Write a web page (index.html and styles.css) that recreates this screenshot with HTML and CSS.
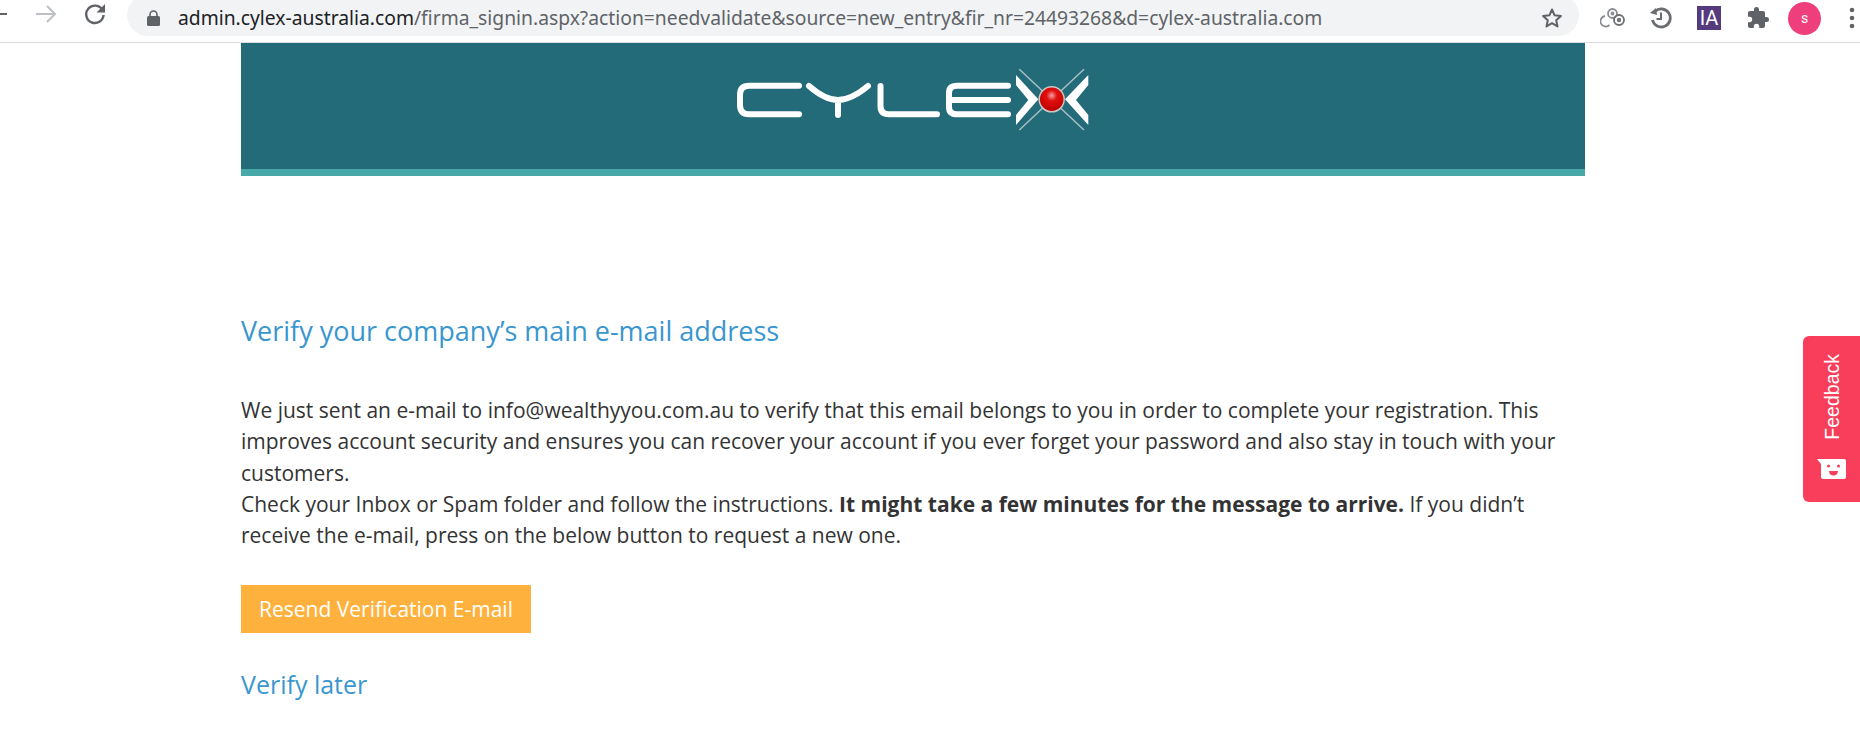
FILE: index.html
```html
<!DOCTYPE html>
<html lang="en">
<head>
<meta charset="utf-8">
<title>Verify your company's main e-mail address</title>
<link rel="stylesheet" href="styles.css">
</head>
<body>
<header class="toolbar">
  <svg class="nav-back" width="8" height="4" viewBox="0 0 8 4"><rect y="1" width="7" height="2" fill="#5f6368"/></svg>
  <svg class="nav-forward" width="22" height="18" viewBox="0 0 22 18"><path d="M1 9H20M12 1l8 8-8 8" fill="none" stroke="#bdc0c4" stroke-width="2"/></svg>
  <svg class="nav-reload" width="22" height="22" viewBox="0 0 22 22"><path d="M18.5 7A8.7 8.7 0 1 0 19.6 12" fill="none" stroke="#5f6368" stroke-width="2.4"/><path d="M21 1v8.5h-8.5z" fill="#5f6368"/></svg>
  <div class="omnibox">
    <svg class="lock" width="13" height="16" viewBox="0 0 13 16"><path d="M3 7V4.5a3.5 3.5 0 0 1 7 0V7" fill="none" stroke="#5f6368" stroke-width="1.6"/><rect y="6" width="13" height="10" rx="1.5" fill="#5f6368"/></svg>
    <div class="url"><span class="url-host">admin.cylex-australia.com</span>/firma_signin.aspx?action=needvalidate&amp;source=new_entry&amp;fir_nr=24493268&amp;d=cylex-australia.com</div>
    <svg class="star" width="22" height="22" viewBox="0 0 22 22"><path d="M11 2.5l2.6 5.8 6.3.7-4.7 4.2 1.3 6.2L11 16.2l-5.5 3.2 1.3-6.2L2.100 9l6.300-.7z" fill="none" stroke="#5f6368" stroke-width="2" stroke-linejoin="round"/></svg>
  </div>
  <div class="extensions">
    <svg class="ext-rings" width="26" height="22" viewBox="0 0 26 22" fill="none" stroke="#8a8d91" stroke-width="1.800"><circle cx="12.500" cy="6.500" r="4.500"/><circle cx="12.500" cy="6.500" r="1"/><circle cx="19" cy="13" r="5" stroke="#6b6e72"/><circle cx="19" cy="13" r="1.300" stroke="#6b6e72"/><path d="M9.500 18A5.300 5.300 0 1 1 5 9"/></svg>
    <svg class="ext-history" width="22" height="22" viewBox="0 0 22 22"><path d="M5 4.500A9 9 0 1 1 2.500 13" fill="none" stroke="#6a6d71" stroke-width="2.800"/><path d="M0 6l6-5 1 7z" fill="#6a6d71"/><path d="M11 5.500V12H6.500" fill="none" stroke="#6a6d71" stroke-width="2"/></svg>
    <div class="ext-ia">IA</div>
    <svg class="ext-puzzle" width="24" height="24" viewBox="0 0 24 24"><path d="M20.500 11H19V7c0-1.100-.9-2-2-2h-4V3.500a2.500 2.500 0 0 0-5 0V5H4c-1.100 0-2 .9-2 2v3.800h1.500a2.700 2.700 0 0 1 0 5.400H2V20c0 1.100.9 2 2 2h3.800v-1.500a2.700 2.700 0 0 1 5.400 0V22H17c1.100 0 2-.9 2-2v-4h1.500a2.500 2.500 0 0 0 0-5z" fill="#5f6368"/></svg>
    <div class="avatar">s</div>
    <svg class="menu-dots" width="6" height="22" viewBox="0 0 6 22"><circle cx="3" cy="3" r="2.300" fill="#5f6368"/><circle cx="3" cy="11" r="2.300" fill="#5f6368"/><circle cx="3" cy="19" r="2.300" fill="#5f6368"/></svg>
  </div>
</header>

<main class="page">
  <div class="banner">
    <svg class="logo" width="352" height="64" viewBox="0 0 352 64" role="img" aria-label="Cylex logo">
      <g fill="none" stroke="#fff" stroke-width="6" stroke-linecap="round" stroke-linejoin="round">
        <path d="M62 17.700H12Q3 17.700 3 27V37Q3 46.300 12 46.300H62"/>
        <path d="M72 18Q88 32 101 32Q114 32 131 18M101 32V47"/>
        <path d="M143.500 18V38Q143.500 46.300 152 46.300H200"/>
        <path d="M271 17.700H220Q212 17.700 212 25V39Q212 46.300 220 46.300H271M216 32H271"/>
      </g>
      <path d="M282.300 1.300L347 62M347 1.300L282.300 62" stroke="#a9bfc4" stroke-width="1.500"/>
      <path d="M279 7L301.300 31.300 279 57V47L291.300 32 279 17zM351.300 7L328 31.300 351.300 57V47L339 32 351.300 17z" fill="#fff"/>
      <defs>
        <radialGradient id="ball" cx="50%" cy="35%" r="60%">
          <stop offset="0" stop-color="#f4a0a0"/>
          <stop offset=".35" stop-color="#e21010"/>
          <stop offset="1" stop-color="#c00000"/>
        </radialGradient>
      </defs>
      <circle cx="314.700" cy="31.300" r="12.500" fill="url(#ball)" stroke="#c9c9c9" stroke-width="1.500"/>
    </svg>
  </div>

  <h1 class="title">Verify your company’s main e-mail address</h1>

  <p class="message">We just sent an e-mail to info@wealthyyou.com.au to verify that this email belongs to you in order to complete your registration. This improves account security and ensures you can recover your account if you ever forget your password and also stay in touch with your customers.<br>Check your Inbox or Spam folder and follow the instructions. <strong>It might take a few minutes for the message to arrive.</strong> If you didn’t receive the e-mail, press on the below button to request a new one.</p>

  <button class="resend" type="button">Resend Verification E-mail</button>

  <a class="later" href="#">Verify later</a>
</main>

<aside class="feedback">
  <span class="feedback-label">Feedback</span>
  <svg class="feedback-face" width="30" height="22" viewBox="0 0 30 22"><path d="M0 1H27a2 2 0 0 1 2 2V19a2 2 0 0 1-2 2H6a2 2 0 0 1-2-2V6z" fill="#fff"/><circle cx="11.500" cy="8" r="1.500" fill="#f83e5a"/><circle cx="21.500" cy="8" r="1.500" fill="#f83e5a"/><path d="M12 13h9a4.500 4.500 0 0 1-9 0z" fill="#f83e5a"/></svg>
</aside>
</body>
</html>
```

FILE: styles.css
```css
* { box-sizing: border-box; }

html, body {
  margin: 0;
  padding: 0;
  height: 100%;
  overflow: hidden;
  background: #fff;
}

body {
  font-family: "Open Sans", "Liberation Sans", sans-serif;
  color: #333;
}

.toolbar {
  display: flex;
  align-items: center;
  height: 43px;
  border-bottom: 1px solid #dadce0;
  overflow: hidden;
  background: #fff;
}

.toolbar svg { flex: none; display: block; }

.nav-back { margin: -14px 0 0 0; }
.nav-forward { margin: -14px 0 0 27px; }
.nav-reload { margin: -14px 0 0 27px; }

.omnibox {
  display: flex;
  align-items: center;
  flex: none;
  width: 1452px;
  height: 42px;
  margin: -12px 0 0 21px;
  padding: 6px 16px 0 20px;
  border-radius: 21px;
  background: #f1f3f4;
}

.url {
  flex: 1;
  margin-left: 18px;
  font-family: "Noto Sans", "Liberation Sans", sans-serif;
  font-size: 19.300px;
  color: #5f6368;
  white-space: nowrap;
  line-height: 24px;
}

.url-host { color: #202124; }

.extensions {
  display: flex;
  align-items: center;
  margin: -6px 0 0 21px;
}

.ext-history { margin-left: 24px; }

.ext-ia {
  width: 24px;
  height: 24px;
  margin-left: 25px;
  background: #553a7e;
  color: #fff;
  font-family: Roboto, "Liberation Sans", sans-serif;
  font-size: 20px;
  line-height: 24px;
  text-align: center;
}

.ext-puzzle { margin-left: 25px; }

.avatar {
  width: 33px;
  height: 33px;
  margin-left: 18px;
  border-radius: 50%;
  background: #ee3f7c;
  color: #fff;
  font-family: Roboto, "Liberation Sans", sans-serif;
  font-size: 14px;
  line-height: 32px;
  text-align: center;
}

.menu-dots { margin-left: 28px; }

.page {
  width: 1344px;
  margin-left: 241px;
}

.banner {
  display: flex;
  justify-content: center;
  height: 133px;
  padding-top: 25px;
  background: #246b79;
  border-bottom: 7px solid #47a8a8;
}

.title {
  margin: 136px 0 0;
  font-size: 27px;
  font-weight: 400;
  line-height: 37px;
  color: #3a96cf;
}

.message {
  margin: 46px 0 0;
  font-size: 21px;
  line-height: 31.300px;
  color: #333;
}

.resend {
  display: block;
  width: 290px;
  height: 48px;
  margin: 34px 0 0;
  padding: 0;
  border: 0;
  background: #ffb13d;
  color: #fff;
  font-family: inherit;
  font-size: 21px;
}

.later {
  display: block;
  margin-top: 34px;
  font-size: 25px;
  line-height: 34px;
  color: #3a96cf;
  text-decoration: none;
}

.feedback {
  position: fixed;
  top: 336px;
  right: 0;
  display: flex;
  flex-direction: column;
  align-items: center;
  gap: 18px;
  width: 57px;
  height: 166px;
  padding-top: 18px;
  border-radius: 6px 0 0 6px;
  background: #f83e5a;
}

.feedback-label {
  writing-mode: vertical-rl;
  transform: rotate(180deg);
  font-family: "Liberation Sans", Arial, sans-serif;
  font-size: 19.500px;
  line-height: 24px;
  color: #fff;
}
```
